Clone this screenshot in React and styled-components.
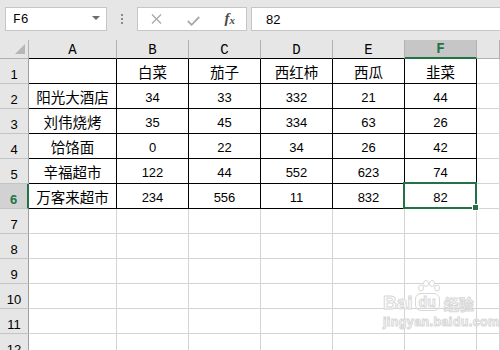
import React from "react";
import styled, { createGlobalStyle, css } from "styled-components";

const GlobalStyle = createGlobalStyle`
  html, body { margin: 0; padding: 0; background: #ffffff; overflow: hidden; }
  body { font-family: "Liberation Mono", "Noto Sans CJK SC", monospace; }
`;

const GREEN = "#217346";
const GRID = "#d4d4d4";
const HEAD_BG = "#e6e6e6";
const HEAD_LINE = "#b1b1b1";

const Page = styled.div`
  width: 500px;
  height: 350px;
  overflow: hidden;
  display: flex;
  flex-direction: column;
  background: #fff;
`;

const Toolbar = styled.div`
  height: 40px;
  flex: none;
  background: ${HEAD_BG};
  display: flex;
  align-items: flex-start;
  padding: 7px 0 0 5px;
  box-sizing: border-box;
`;

const Box = styled.div`
  height: 24px;
  box-sizing: border-box;
  background: #fff;
  border: 1px solid #c6c6c6;
  display: flex;
  align-items: center;
`;

const NameBox = styled(Box)`
  width: 102px;
  padding: 0 6px 0 7px;
  justify-content: space-between;
  font-family: "Liberation Mono", monospace;
  font-size: 13px;
  color: #000;
`;

const DropArrow = styled.span`
  width: 0;
  height: 0;
  border-left: 4px solid transparent;
  border-right: 4px solid transparent;
  border-top: 4px solid #6b6b6b;
  margin-top: -2px;
`;

const Grip = styled.div`
  width: 30px;
  height: 24px;
  display: flex;
  flex-direction: column;
  align-items: center;
  justify-content: center;
  gap: 2px;
`;

const GripDot = styled.span`
  width: 2px;
  height: 2px;
  background: #8a8a8a;
`;

const FxBox = styled(Box)`
  width: 110px;
  padding: 0 11px 0 13px;
  justify-content: space-between;
`;

const Fx = styled.span`
  font-family: "Liberation Serif", serif;
  font-style: italic;
  font-weight: 700;
  font-size: 15px;
  line-height: 15px;
  color: #4a4a4a;
  sub {
    font-size: 11px;
    vertical-align: -1px;
  }
`;

const FormulaInput = styled(Box)`
  flex: 1;
  margin-left: 4px;
  margin-right: -4px;
  padding-left: 14px;
  font-family: "Liberation Sans", sans-serif;
  font-size: 13px;
  color: #000;
`;

const Sheet = styled.div`
  display: grid;
  grid-template-columns: 29px 88px repeat(5, 72px) 1fr;
  grid-template-rows: 19px repeat(12, 25px);
  flex: none;
`;

const cellBase = css`
  box-sizing: border-box;
  display: flex;
  align-items: center;
  justify-content: center;
  min-width: 0;
`;

const Corner = styled.div`
  ${cellBase};
  background: ${HEAD_BG};
  border-right: 1px solid ${HEAD_LINE};
  border-bottom: 1px solid ${HEAD_LINE};
  position: relative;
`;

const CornerTri = styled.span`
  position: absolute;
  right: 3px;
  bottom: 4px;
  width: 0;
  height: 0;
  border-left: 10px solid transparent;
  border-bottom: 10px solid #b6b6b6;
`;

const ColHead = styled.div`
  ${cellBase};
  background: ${(p) => (p.$selected ? "#c6c6c6" : HEAD_BG)};
  border-right: 1px solid ${HEAD_LINE};
  border-bottom: ${(p) =>
    p.$selected ? `2px solid ${GREEN}` : `1px solid ${p.$table ? "#000" : HEAD_LINE}`};
  font-family: "Liberation Mono", monospace;
  font-size: 14px;
  font-weight: ${(p) => (p.$selected ? 700 : 400)};
  color: ${(p) => (p.$selected ? GREEN : "#000")};
  padding-top: 1px;
`;

const RowHead = styled.div`
  ${cellBase};
  background: ${(p) => (p.$selected ? "#d2d2d2" : HEAD_BG)};
  border-right: ${(p) => (p.$selected ? `2px solid ${GREEN}` : "1px solid #9f9f9f")};
  border-bottom: 1px solid #c4c4c4;
  font-family: "Liberation Sans", sans-serif;
  font-size: 13px;
  font-weight: ${(p) => (p.$selected ? 700 : 400)};
  color: ${(p) => (p.$selected ? GREEN : "#000")};
  padding-top: 7px;
`;

const Cell = styled.div`
  ${cellBase};
  position: relative;
  background: #fff;
  border-right: 1px solid ${(p) => (p.$table ? "#000" : GRID)};
  border-bottom: 1px solid ${(p) => (p.$table ? "#000" : GRID)};
  color: #000;
  ${(p) =>
    p.$cjk
      ? css`
          font-family: "Noto Sans CJK SC", sans-serif;
          font-size: 14.5px;
          padding-top: 1px;
        `
      : css`
          font-family: "Liberation Sans", sans-serif;
          font-size: 13px;
          padding-top: 3px;
        `}
`;

const Selection = styled.div`
  position: absolute;
  top: -2px;
  left: -2px;
  right: -1px;
  bottom: -1px;
  border: 2px solid ${GREEN};
  z-index: 2;
  pointer-events: none;
`;

const Handle = styled.span`
  position: absolute;
  right: -4px;
  bottom: -4px;
  width: 5px;
  height: 5px;
  background: ${GREEN};
  border: 1px solid #fff;
`;

const Watermark = styled.div`
  position: absolute;
  left: 383px;
  top: 293px;
  display: flex;
  flex-direction: column;
  align-items: flex-start;
  pointer-events: none;
  color: #fff;
  -webkit-text-stroke: 1px #d8d8d8;
`;

const WmTop = styled.div`
  display: flex;
  align-items: flex-end;
  gap: 2px;
  font-family: "Liberation Sans", sans-serif;
  font-weight: 700;
  font-size: 19px;
  line-height: 19px;
`;

const WmDu = styled.span`
  position: relative;
  font-size: 14px;
  line-height: 14px;
  padding: 1px 3px 1px;
  border: 1.5px solid #d8d8d8;
  border-radius: 6px;
  margin-bottom: 1px;
`;

const WmPaw = styled.svg`
  position: absolute;
  left: 1px;
  top: -14px;
`;

const WmCn = styled.span`
  font-family: "Noto Sans CJK SC", sans-serif;
  font-size: 15px;
  line-height: 17px;
  margin-left: 2px;
`;

const WmUrl = styled.div`
  font-family: "Liberation Sans", sans-serif;
  font-weight: 700;
  font-size: 12.5px;
  letter-spacing: 0.4px;
  margin-top: 3px;
`;

const Root = styled.div`
  position: relative;
`;

const cols = ["A", "B", "C", "D", "E", "F"];
const data = [
  ["", "白菜", "茄子", "西红柿", "西瓜", "韭菜"],
  ["阳光大酒店", "34", "33", "332", "21", "44"],
  ["刘伟烧烤", "35", "45", "334", "63", "26"],
  ["饸饹面", "0", "22", "34", "26", "42"],
  ["辛福超市", "122", "44", "552", "623", "74"],
  ["万客来超市", "234", "556", "11", "832", "82"],
];

const isCjk = (s) => /[\u4e00-\u9fff]/.test(s);

export default function App() {
  const rows = [];
  for (let r = 1; r <= 12; r++) {
    const sel = r === 6;
    rows.push(
      <RowHead key={`rh${r}`} $selected={sel}>
        {r}
      </RowHead>
    );
    for (let c = 0; c < 7; c++) {
      const inTable = r <= 6 && c < 6;
      const val = inTable ? data[r - 1][c] : "";
      const selectedCell = r === 6 && c === 5;
      rows.push(
        <Cell key={`c${r}-${c}`} $table={inTable} $cjk={isCjk(val)}>
          {val}
          {selectedCell && (
            <Selection>
              <Handle />
            </Selection>
          )}
        </Cell>
      );
    }
  }

  return (
    <Root>
      <GlobalStyle />
      <Page>
        <Toolbar>
          <NameBox>
            <span>F6</span>
            <DropArrow />
          </NameBox>
          <Grip>
            <GripDot />
            <GripDot />
            <GripDot />
          </Grip>
          <FxBox>
            <svg width="11" height="10" viewBox="0 0 11 10">
              <path d="M1 0.5 L10 9.5 M10 0.5 L1 9.5" stroke="#a9a9a9" strokeWidth="1.3" fill="none" />
            </svg>
            <svg width="13" height="10" viewBox="0 0 13 10" style={{ marginTop: 3 }}>
              <path d="M0.8 5 L4.6 8.8 L12.2 1" stroke="#a9a9a9" strokeWidth="1.8" fill="none" />
            </svg>
            <Fx>
              f<sub>x</sub>
            </Fx>
          </FxBox>
          <FormulaInput>82</FormulaInput>
        </Toolbar>
        <Sheet>
          <Corner>
            <CornerTri />
          </Corner>
          {cols.map((c) => (
            <ColHead key={c} $table $selected={c === "F"}>
              {c}
            </ColHead>
          ))}
          <ColHead />
          {rows}
        </Sheet>
      </Page>
      <Watermark>
        <WmTop>
          <span>Bai</span>
          <WmDu>
            <WmPaw width="24" height="14" viewBox="0 0 24 14">
              <g fill="#fff" stroke="#d8d8d8" strokeWidth="1">
                <ellipse cx="4" cy="8" rx="2.5" ry="3" />
                <ellipse cx="9" cy="3.5" rx="2.5" ry="3" />
                <ellipse cx="15" cy="3.5" rx="2.5" ry="3" />
                <ellipse cx="20" cy="8" rx="2.5" ry="3" />
              </g>
            </WmPaw>
            du
          </WmDu>
          <WmCn>经验</WmCn>
        </WmTop>
        <WmUrl>jingyan.baidu.com</WmUrl>
      </Watermark>
    </Root>
  );
}
